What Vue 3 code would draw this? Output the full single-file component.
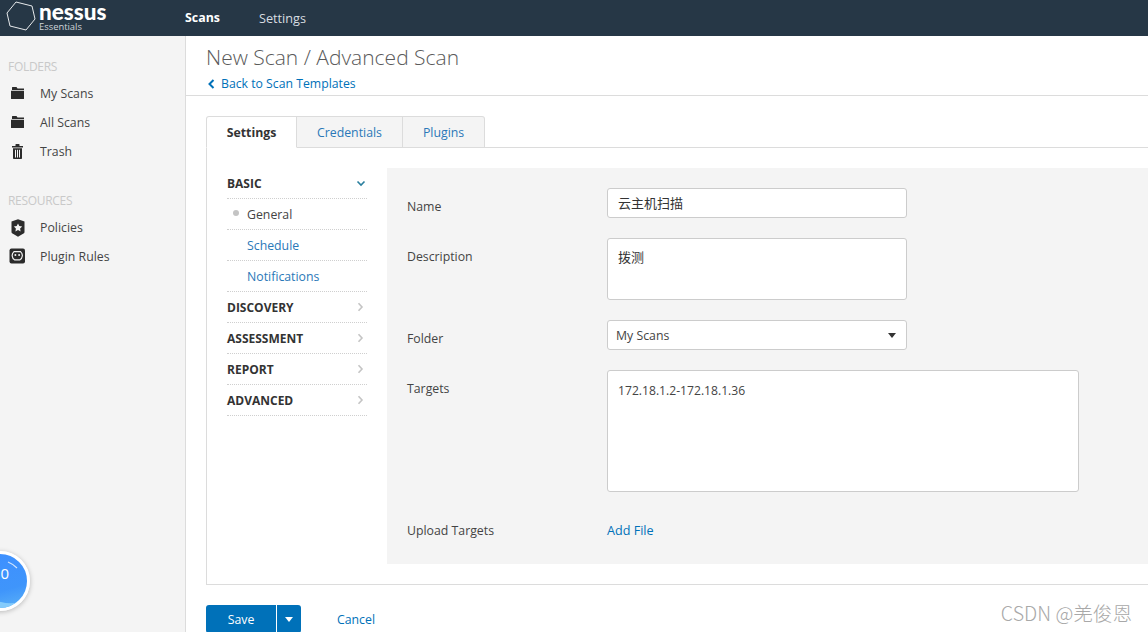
<script setup>
const folders = [
  { label: 'My Scans', icon: 'folder' },
  { label: 'All Scans', icon: 'folder' },
  { label: 'Trash', icon: 'trash' },
]
const resources = [
  { label: 'Policies', icon: 'shield' },
  { label: 'Plugin Rules', icon: 'plug' },
]
const subItems = [
  { label: 'General', active: true },
  { label: 'Schedule' },
  { label: 'Notifications' },
]
const sections = ['DISCOVERY', 'ASSESSMENT', 'REPORT', 'ADVANCED']
</script>

<template>
  <div class="page">
    <header class="topbar">
      <div class="logo">
        <svg class="hex" width="30" height="30" viewBox="0 0 30 30" fill="none">
          <path d="M1 12 L10 1 L26 5 L29 18 L20 29 L4 25 Z" stroke="#e6e9eb" stroke-width="1" stroke-linejoin="round" />
        </svg>
        <div class="logo-text">
          <span class="logo-name">nessus</span>
          <span class="logo-sub">Essentials</span>
        </div>
      </div>
      <nav class="topnav">
        <span class="nav-item nav-active">Scans</span>
        <span class="nav-item">Settings</span>
      </nav>
    </header>

    <div class="body">
      <aside class="sidebar">
        <div class="side-title">FOLDERS</div>
        <div v-for="item in folders" :key="item.label" class="side-row">
          <span class="side-icon">
            <svg width="17" height="18" viewBox="0 0 17 18">
              <template v-if="item.icon === 'folder'">
                <path d="M3 2.5 Q3 2 3.5 2 H7.5 L8.5 3.5 H15 V5 H3 Z" fill="#2b2b2b" />
                <path d="M2 5.8 H15 V13.5 Q15 14 14.5 14 H2.5 Q2 14 2 13.5 Z" fill="#2b2b2b" />
              </template>
              <template v-else>
                <path d="M6.5 3 V1.5 Q6.5 1 7 1 H10 Q10.5 1 10.5 1.5 V3 H14 V4.6 H3 V3 Z" fill="#2b2b2b" />
                <path d="M4 5.2 H13 V15.2 Q13 16 12.2 16 H4.8 Q4 16 4 15.2 Z" fill="#2b2b2b" />
                <path d="M6.5 6.8 V14.5 M8.5 6.8 V14.5 M10.5 6.8 V14.5" stroke="#f4f4f4" stroke-width="1" />
              </template>
            </svg>
          </span>
          <span>{{ item.label }}</span>
        </div>
        <div class="side-title second">RESOURCES</div>
        <div v-for="item in resources" :key="item.label" class="side-row">
          <span class="side-icon">
            <svg width="17" height="18" viewBox="0 0 17 18">
              <template v-if="item.icon === 'shield'">
                <path d="M9 0.3 L15.5 2.5 V13 Q15.5 14 14.5 14.6 L9 17.8 L3.5 14.6 Q2.5 14 2.5 13 V2.5 Z" fill="#2b2b2b" />
                <path d="M9 4.4 L10.3 7.1 L13.2 7.5 L11.1 9.5 L11.6 12.4 L9 11 L6.4 12.4 L6.9 9.5 L4.8 7.5 L7.7 7.1 Z" fill="#f4f4f4" />
              </template>
              <template v-else>
                <rect x="0.5" y="0.5" width="15.5" height="15" rx="2" fill="#2b2b2b" />
                <path d="M5 3.6 H11.5 Q13.6 5.5 13.3 8 Q12.9 10.8 11 11.8 H5.5 Q3.6 10.8 3.2 8 Q2.9 5.5 5 3.6 Z" fill="none" stroke="#f4f4f4" stroke-width="1.2" />
                <circle cx="6.4" cy="7" r="1" fill="#f4f4f4" />
                <circle cx="10.1" cy="7" r="1" fill="#f4f4f4" />
              </template>
            </svg>
          </span>
          <span>{{ item.label }}</span>
        </div>
        <div class="gauge">
          <svg class="gauge-art" width="54" height="54" viewBox="0 0 54 54">
            <path d="M0 47 Q14 44 28 48 T54 44 V54 H0 Z" fill="#84cbfb" />
            <path d="M35 8 Q40 10 44 14" fill="none" stroke="#fff" stroke-opacity="0.75" stroke-width="1.2" />
          </svg>
          <span class="gauge-text">0</span>
        </div>
      </aside>

      <main class="main">
        <div class="head">
          <h1 class="title">New Scan / Advanced Scan</h1>
          <a class="back">
            <svg width="8" height="10" viewBox="0 0 8 10"><path d="M6.5 1 L2.5 5 L6.5 9" fill="none" stroke="#0071b9" stroke-width="2" /></svg>
            Back to Scan Templates
          </a>
        </div>

        <div class="content">
          <div class="tabs">
            <span class="tab tab-active">Settings</span>
            <span class="tab">Credentials</span>
            <span class="tab">Plugins</span>
          </div>

          <div class="box">
            <div class="menu">
              <div class="menu-row menu-head">
                <span>BASIC</span>
                <svg width="10" height="7" viewBox="0 0 10 7"><path d="M1.5 1.5 L5 5 L8.5 1.5" fill="none" stroke="#2a7f9e" stroke-width="1.6" /></svg>
              </div>
              <div v-for="sub in subItems" :key="sub.label" class="menu-row menu-sub" :class="{ current: sub.active }">
                <span v-if="sub.active" class="dot"></span>
                {{ sub.label }}
              </div>
              <div v-for="s in sections" :key="s" class="menu-row menu-head">
                <span>{{ s }}</span>
                <svg class="more" width="7" height="10" viewBox="0 0 7 10"><path d="M1.5 1.2 L5 5 L1.5 8.8" fill="none" stroke="#c4c4c4" stroke-width="1.6" /></svg>
              </div>
            </div>

            <div class="panel">
              <div class="field">
                <label class="label lab">Name</label>
                <div class="control short h30 cjk">云主机扫描</div>
              </div>
              <div class="field">
                <label class="label lab">Description</label>
                <div class="control short h62 cjk top">拨测</div>
              </div>
              <div class="field">
                <label class="label lab">Folder</label>
                <div class="control short h30 select">
                  <span>My Scans</span>
                  <span class="caret"></span>
                </div>
              </div>
              <div class="field">
                <label class="label lab">Targets</label>
                <div class="control wide h122 top targets">172.18.1.2-172.18.1.36</div>
              </div>
              <div class="field upload">
                <label class="label">Upload Targets</label>
                <a class="add">Add File</a>
              </div>
            </div>
          </div>

          <div class="actions">
            <span class="save">Save</span>
            <span class="save-drop"><span class="caret white"></span></span>
            <a class="cancel">Cancel</a>
          </div>
        </div>
      </main>
    </div>

    <div class="watermark">CSDN @羌俊恩</div>
  </div>
</template>

<style>
html, body { margin: 0; padding: 0; background: #fff; overflow: hidden; }
</style>

<style scoped>
.page {
  position: relative;
  width: 1148px;
  height: 632px;
  overflow: hidden;
  font-family: "Open Sans", "Noto Sans CJK SC", sans-serif;
  font-size: 12.3px;
  color: #3f3f3f;
  background: #fff;
}
.topbar {
  height: 36px;
  background: #263746;
  display: flex;
  align-items: center;
}
.logo {
  width: 185px;
  align-self: flex-start;
  display: flex;
  align-items: flex-start;
  padding-left: 6px;
  box-sizing: border-box;
  gap: 3px;
}
.hex { flex: none; margin-top: 1px; }
.logo-text { display: flex; flex-direction: column; padding-top: 3px; }
.logo-name {
  font-family: "Lato", sans-serif;
  font-weight: 900;
  font-size: 22.5px;
  line-height: 17px;
  color: #fff;
}
.logo-sub { font-size: 9.4px; line-height: 10px; margin-top: 2px; color: #cfd5da; }
.topnav { display: flex; gap: 39px; }
.nav-item { font-size: 12.7px; color: #d8dde1; }
.nav-active { color: #fff; font-weight: 700; font-size: 12.4px; }
.body { display: flex; height: 596px; }
.sidebar {
  position: relative;
  width: 186px;
  flex: none;
  box-sizing: border-box;
  background: #f4f4f4;
  border-right: 1px solid #dcdcdc;
  padding-top: 21px;
  overflow: hidden;
}
.side-title {
  padding-left: 8px;
  font-size: 12px;
  line-height: 20px;
  color: #c9c9c9;
  margin-bottom: 2px;
  letter-spacing: -0.3px;
}
.side-title.second { margin-top: 25px; margin-bottom: 2px; }
.side-row {
  height: 29px;
  display: flex;
  align-items: center;
  color: #444;
}
.side-icon {
  width: 40px;
  padding-left: 9px;
  box-sizing: border-box;
  display: flex;
  align-items: center;
}
.gauge {
  position: absolute;
  left: -30px;
  top: 515px;
  width: 54px;
  height: 54px;
  border-radius: 50%;
  border: 3px solid #fff;
  background: linear-gradient(165deg, #3d8fff, #3f95fb 65%, #5cb2f7);
  box-shadow: 0 1px 5px rgba(0, 0, 0, 0.25);
  overflow: hidden;
}
.gauge-art { position: absolute; left: 0; top: 0; }
.gauge-text {
  position: absolute;
  right: 18px;
  top: 9px;
  color: #fff;
  font-size: 15px;
  line-height: 20px;
}
.main { flex: 1; min-width: 0; }
.head {
  height: 60px;
  box-sizing: border-box;
  padding: 7px 0 0 20px;
  border-bottom: 1px solid #dcdcdc;
}
.title {
  margin: 0;
  font-size: 21px;
  line-height: 29px;
  font-weight: 300;
  color: #5a5a5a;
}
.back {
  display: flex;
  align-items: center;
  gap: 6px;
  margin-top: 3px;
  padding-left: 1px;
  color: #0071b9;
  line-height: 18px;
  font-size: 12.25px;
}
.content { padding: 20px 0 0 20px; }
.tabs { display: flex; height: 32px; }
.tab {
  box-sizing: border-box;
  height: 32px;
  padding: 0 20px;
  display: flex;
  align-items: center;
  background: #f4f4f4;
  border: 1px solid #dcdcdc;
  border-left: none;
  color: #2a78b8;
}
.tab:last-child { border-top-right-radius: 3px; }
.tab-active {
  width: 91px;
  justify-content: center;
  padding: 0;
  background: #fff;
  border-left: 1px solid #dcdcdc;
  border-bottom-color: #fff;
  border-top-left-radius: 3px;
  color: #333;
  font-weight: 700;
  position: relative;
  z-index: 1;
}
.box {
  margin-top: -1px;
  height: 438px;
  box-sizing: border-box;
  border: 1px solid #dcdcdc;
  border-right: none;
  padding: 20px 0 0 20px;
  display: flex;
  gap: 20px;
}
.menu { width: 140px; flex: none; }
.menu-row {
  height: 31px;
  box-sizing: border-box;
  border-bottom: 1px dotted #cfcfcf;
  display: flex;
  align-items: center;
}
.menu-head {
  justify-content: space-between;
  padding-right: 1px;
  font-weight: 700;
  font-size: 12px;
  color: #333;
}
.more { margin-right: 2px; }
.menu-sub {
  position: relative;
  padding-left: 20px;
  color: #2a78b8;
}
.menu-sub.current { color: #444; }
.dot {
  position: absolute;
  left: 6px;
  top: 11px;
  width: 6px;
  height: 6px;
  border-radius: 50%;
  background: #c4c4c4;
}
.panel {
  flex: 1;
  height: 396px;
  box-sizing: border-box;
  background: #f4f4f4;
  padding: 20px 0 0 20px;
  display: flex;
  flex-direction: column;
  gap: 20px;
}
.field { display: flex; align-items: flex-start; }
.label {
  width: 200px;
  flex: none;
  line-height: 18px;
  color: #444;
}
.lab { padding-top: 10px; }
.control {
  box-sizing: border-box;
  background: #fff;
  border: 1px solid #ccc;
  border-radius: 3px;
  padding: 0 10px;
  display: flex;
  align-items: center;
  color: #444;
}
.short { width: 300px; }
.wide { width: 472px; }
.h30 { height: 30px; }
.h62 { height: 62px; }
.h122 { height: 122px; }
.top { align-items: flex-start; padding-top: 10px; line-height: 18px; }
.targets { padding-top: 11px; font-size: 12.15px; }
.cjk { font-size: 13px; color: #333; padding-bottom: 1px; }
.cjk.top { padding-top: 9px; }
.select { justify-content: space-between; padding: 0 10px 0 8px; }
.caret {
  width: 0;
  height: 0;
  border-left: 4.5px solid transparent;
  border-right: 4.5px solid transparent;
  border-top: 5px solid #333;
}
.caret.white { border-top-color: #fff; }
.upload { margin-top: 10px; line-height: 18px; }
.add { color: #0071b9; line-height: 18px; font-size: 12.6px; }
.actions {
  display: flex;
  align-items: stretch;
  height: 28px;
  margin-top: 20px;
}
.save {
  width: 70px;
  background: #0071b9;
  border-radius: 3px 0 0 3px;
  color: #fff;
  display: flex;
  align-items: center;
  justify-content: center;
}
.save-drop {
  width: 24px;
  margin-left: 1px;
  background: #0071b9;
  border-radius: 0 3px 3px 0;
  display: flex;
  align-items: center;
  justify-content: center;
}
.cancel {
  margin-left: 36px;
  display: flex;
  align-items: center;
  color: #0071b9;
}
.watermark {
  position: absolute;
  right: 16px;
  top: 599px;
  font-family: "Noto Sans CJK SC", "Open Sans", sans-serif;
  font-size: 19.6px;
  font-weight: 300;
  line-height: 28px;
  color: #a8a8a8;
}
</style>
